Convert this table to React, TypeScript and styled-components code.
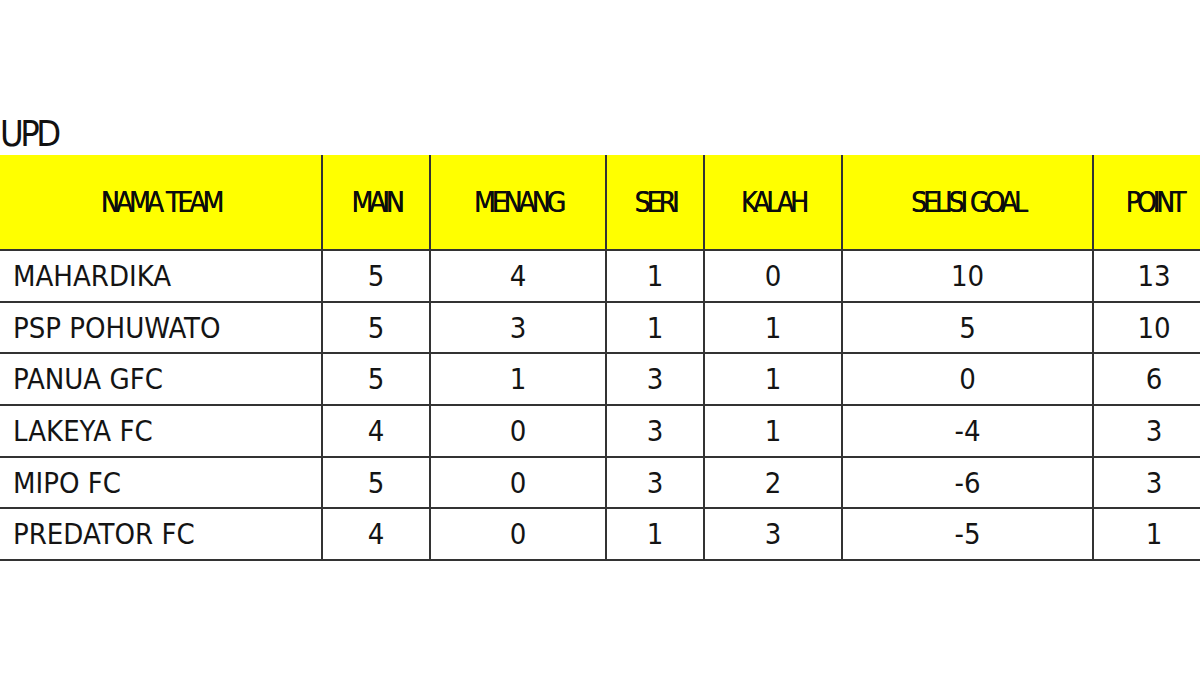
import styled, { createGlobalStyle } from 'styled-components';

interface TeamRow {
  name: string;
  main: number;
  menang: number;
  seri: number;
  kalah: number;
  selisih: number;
  point: number;
}

const rows: TeamRow[] = [
  { name: 'MAHARDIKA', main: 5, menang: 4, seri: 1, kalah: 0, selisih: 10, point: 13 },
  { name: 'PSP POHUWATO', main: 5, menang: 3, seri: 1, kalah: 1, selisih: 5, point: 10 },
  { name: 'PANUA GFC', main: 5, menang: 1, seri: 3, kalah: 1, selisih: 0, point: 6 },
  { name: 'LAKEYA FC', main: 4, menang: 0, seri: 3, kalah: 1, selisih: -4, point: 3 },
  { name: 'MIPO FC', main: 5, menang: 0, seri: 3, kalah: 2, selisih: -6, point: 3 },
  { name: 'PREDATOR FC', main: 4, menang: 0, seri: 1, kalah: 3, selisih: -5, point: 1 },
];

const columns = [
  { label: 'NAMA TEAM', width: 323 },
  { label: 'MAIN', width: 108 },
  { label: 'MENANG', width: 176 },
  { label: 'SERI', width: 98 },
  { label: 'KALAH', width: 138 },
  { label: 'SELISI GOAL', width: 251 },
  { label: 'POINT', width: 122 },
];

const tableWidth = columns.reduce((sum, c) => sum + c.width, 0);

const GlobalStyle = createGlobalStyle`
  html, body {
    margin: 0;
    padding: 0;
    background: #ffffff;
    overflow: hidden;
  }
  body {
    font-family: "DejaVu Sans", Verdana, sans-serif;
    color: #141414;
  }
`;

const Page = styled.div`
  width: 1200px;
  height: 675px;
  overflow: hidden;
  padding-top: 112px;
  box-sizing: border-box;
`;

const Title = styled.div`
  font-size: 36px;
  font-stretch: condensed;
  letter-spacing: -3.5px;
  line-height: 43px;
  color: #111;
`;

const Table = styled.table<{ $width: number }>`
  width: ${(p) => p.$width}px;
  border-collapse: collapse;
  table-layout: fixed;
  margin-left: -2px;
`;

const HeadCell = styled.th`
  background: #ffff00;
  height: 94px;
  padding: 0;
  font-weight: normal;
  font-size: 28px;
  font-stretch: condensed;
  letter-spacing: -4px;
  word-spacing: 2px;
  text-align: center;
  border-left: 2px solid #333;
  border-right: 2px solid #333;
  border-bottom: 2px solid #333;
  color: #0c0c0c;
  text-shadow: 0.4px 0 0 #0c0c0c;
  white-space: nowrap;
`;

const Cell = styled.td<{ $left?: boolean }>`
  height: 49.7px;
  padding: 0 0 0 ${(p) => (p.$left ? '13px' : '0')};
  font-size: 29px;
  font-stretch: condensed;
  text-align: ${(p) => (p.$left ? 'left' : 'center')};
  border: 2px solid #333;
  color: #141414;
  white-space: nowrap;
`;

export default function App() {
  return (
    <Page>
      <GlobalStyle />
      <Title>UPD</Title>
      <Table $width={tableWidth}>
        <colgroup>
          {columns.map((c) => (
            <col key={c.label} style={{ width: c.width }} />
          ))}
        </colgroup>
        <thead>
          <tr>
            {columns.map((c) => (
              <HeadCell key={c.label}>{c.label}</HeadCell>
            ))}
          </tr>
        </thead>
        <tbody>
          {rows.map((r) => (
            <tr key={r.name}>
              <Cell $left>{r.name}</Cell>
              <Cell>{r.main}</Cell>
              <Cell>{r.menang}</Cell>
              <Cell>{r.seri}</Cell>
              <Cell>{r.kalah}</Cell>
              <Cell>{r.selisih}</Cell>
              <Cell>{r.point}</Cell>
            </tr>
          ))}
        </tbody>
      </Table>
    </Page>
  );
}
